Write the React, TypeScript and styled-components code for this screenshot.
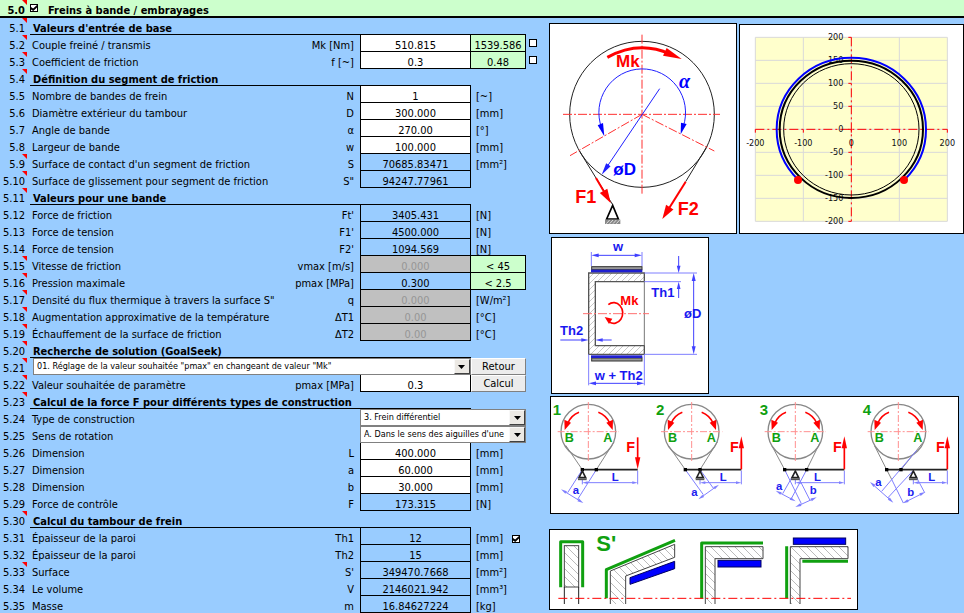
import React from "react";
import styled, { createGlobalStyle, css } from "styled-components";

const INK = "#000000";
const RED = "#ff0000";
const BLUE = "#0000ff";
const SOFT_BLUE = "#7f7fff";
const GREEN = "#10a010";

const GlobalStyle = createGlobalStyle`
  html, body {
    margin: 0;
    background: #99ccff;
  }
  body, input, select, button {
    font-family: "DejaVu Sans Condensed", "DejaVu Sans", sans-serif;
    font-size: 11px;
    color: ${INK};
  }
`;

/* ---------- sheet ---------- */

const Sheet = styled.main`
  min-height: 100vh;
  background: #99ccff;
  overflow: hidden;
`;

const TitleBar = styled.header`
  display: flex;
  align-items: center;
  height: 16px;
  background: #ccffcc;
  border-bottom: 2px solid ${INK};
`;

const Title = styled.h1`
  margin: 0;
  padding: 6px 0 0 10px;
  font-size: 11px;
  line-height: 10px;
`;

const TitleNumber = styled.span`
  position: relative;
  box-sizing: border-box;
  width: 30px;
  height: 16px;
  padding: 6px 5px 0 0;
  text-align: right;
  line-height: 10px;
  font-weight: bold;
`;

const Body = styled.div`
  display: grid;
  grid-template-columns: minmax(0, 549fr) minmax(0, 415fr);
  align-items: start;
`;

const NoteMark = styled.i`
  position: absolute;
  top: 0;
  right: 3px;
  width: 5px;
  height: 5px;
  background: ${RED};
  clip-path: polygon(0 0, 100% 0, 100% 100%);
`;

const Table = styled.table`
  width: 100%;
  table-layout: fixed;
  border-collapse: separate;
  border-spacing: 0;
  line-height: 10px;
  white-space: nowrap;

  td, th {
    box-sizing: border-box;
    height: 17px;
    padding: 6px 0 0;
    vertical-align: top;
    font-weight: normal;
    text-align: left;
  }
`;

const Col = styled.col<{ $w?: number }>`
  ${(p) => p.$w && css`width: ${p.$w}px;`}
`;

const NumberCell = styled.td`
  position: relative;

  && {
    padding-right: 5px;
    text-align: right;
  }
`;

const HeadingCell = styled.th`
  && {
    padding-left: 3px;
    font-weight: bold;
    border-bottom: 1px solid ${INK};
  }
`;

const LabelCell = styled.th`
  && {
    padding-left: 2px;
  }
`;

const SymbolCell = styled.td`
  && {
    padding-right: 6px;
    text-align: right;
  }
`;

type Tone = "input" | "plain" | "off";

const ValueCell = styled.td<{ $tone: Tone }>`
  && {
    padding-top: ${(p) => (p.$tone === "input" ? 0 : 6)}px;
    text-align: center;
    border: solid ${INK};
    border-width: 0 1px 1px;
    background: ${(p) => ({ input: "#ffffff", plain: "transparent", off: "#c0c0c0" })[p.$tone]};
    color: ${(p) => (p.$tone === "off" ? "#969696" : INK)};
  }
`;

const ValueInput = styled.input`
  display: block;
  box-sizing: border-box;
  width: 100%;
  height: 16px;
  padding: 4px 0 0;
  border: 0;
  background: transparent;
  text-align: center;
  line-height: 12px;
`;

const LimitCell = styled.td`
  && {
    text-align: center;
    background: #ccffcc;
    border: solid ${INK};
    border-width: 0 1px 1px 0;
  }
`;

const UnitCell = styled.td<{ $ruled?: boolean }>`
  && {
    padding-left: 5px;
    ${(p) => p.$ruled && css`border-bottom: 1px solid ${INK};`}
  }
`;

const UnitLine = styled.div`
  display: flex;
  align-items: center;
  gap: 9px;
`;

const SideCell = styled.td`
  && {
    padding-top: 4px;
    padding-left: 3px;
  }
`;

const ControlCell = styled.td<{ $indent?: boolean }>`
  && {
    padding: 0 0 0 ${(p) => (p.$indent ? 3 : 0)}px;
  }
`;

const Tick = styled.input.attrs({ type: "checkbox" })`
  appearance: none;
  display: block;
  box-sizing: border-box;
  flex: none;
  width: 8px;
  height: 8px;
  margin: 0;
  border: 1px solid ${INK};
  background: #ffffff;

  &:checked::after {
    content: "";
    display: block;
    width: 6px;
    height: 6px;
    background: ${INK};
    clip-path: polygon(0 35%, 35% 60%, 100% 0, 100% 40%, 38% 100%, 0 75%);
  }
`;

const Combo = styled.div`
  display: grid;
  grid-template-columns: minmax(0, 1fr) 16px;
  height: 17px;
  box-sizing: border-box;
  border: 1px solid #808080;
  background: #ffffff;
`;

const ComboSelect = styled.select`
  appearance: none;
  grid-area: 1 / 1 / 2 / 3;
  width: 100%;
  height: 15px;
  padding: 0 15px 0 3px;
  border: 0;
  border-radius: 0;
  background: transparent;
  font-size: 9px;
  line-height: 15px;
`;

const ComboArrow = styled.span`
  grid-area: 1 / 2;
  display: grid;
  place-items: center;
  box-sizing: border-box;
  border: 1px solid;
  border-color: #f8f8f8 #404040 #404040 #f8f8f8;
  background: #ece9e4;
  pointer-events: none;
`;

const PushButton = styled.button`
  display: block;
  width: 100%;
  height: 17px;
  padding: 0;
  border: 1px solid;
  border-color: #ffffff #808080 #808080 #ffffff;
  background: #ececec;
  line-height: 13px;
`;

/* ---------- figures ---------- */

const Gallery = styled.aside`
  display: grid;
  grid-template-columns: 160fr 28fr 121fr 101fr 5fr;
  padding-top: 5px;
`;

const Figure = styled.figure<{ $from: number; $to: number; $left?: number; $top?: number }>`
  grid-column: ${(p) => p.$from} / ${(p) => p.$to};
  align-self: start;
  min-width: 0;
  margin: ${(p) => p.$top ?? 0}px 0 0 ${(p) => p.$left ?? 0}px;
  border: 1px solid ${INK};
  background: #ffffff;
`;

const Drawing = styled.svg`
  display: block;
  width: 100%;
  height: auto;
  font-family: "Liberation Sans", sans-serif;
  font-weight: bold;
`;

const AxisText = styled.g`
  font-family: "DejaVu Sans Condensed", "DejaVu Sans", sans-serif;
  font-weight: normal;
`;

type ArrowProps = {
  p: [number, number, number, number];
  color: string;
  w: number;
  head: number;
  spread?: number;
  both?: boolean;
};

function headPoints(x: number, y: number, ux: number, uy: number, head: number, spread: number) {
  const bx = x - ux * head;
  const by = y - uy * head;
  return `${x},${y} ${bx - uy * spread},${by + ux * spread} ${bx + uy * spread},${by - ux * spread}`;
}

function Arrow({ p: [x1, y1, x2, y2], color, w, head, spread = head / 4, both }: ArrowProps) {
  const len = Math.hypot(x2 - x1, y2 - y1);
  const ux = (x2 - x1) / len;
  const uy = (y2 - y1) / len;
  const trim = head * 0.7;
  return (
    <g stroke="none" fill={color}>
      <line
        x1={both ? x1 + ux * trim : x1}
        y1={both ? y1 + uy * trim : y1}
        x2={x2 - ux * trim}
        y2={y2 - uy * trim}
        stroke={color}
        strokeWidth={w}
      />
      <polygon points={headPoints(x2, y2, ux, uy, head, spread)} />
      {both && <polygon points={headPoints(x1, y1, -ux, -uy, head, spread)} />}
    </g>
  );
}

function ForcesFigure() {
  return (
    <Drawing viewBox="15 18 558 627" role="img" aria-label="Forces sur le frein à bande">
      <g fill="none" stroke="#222" strokeWidth="3">
        <ellipse cx="291" cy="289" rx="217" ry="219" />
        <path d="M104 400L153 480L203 560M486 385L422 491" />
      </g>
      <g fill="none" stroke="#ff3030" strokeWidth="3" strokeDasharray="27 6 6 6">
        <path d="M291 50V527M54 289H525M291 289L75 413M291 289L508 399" />
      </g>
      <g fill="none" stroke="#2020ff" strokeWidth="3">
        <path d="M170 330A130 131 0 1 1 415 325" />
      </g>
      <g fill={BLUE}>
        <polygon points="178,355 158,322 174,315" />
        <polygon points="407,349 408,314 425,318" />
      </g>
      <Arrow p={[344, 212, 170, 470]} color="#2020ff" w={3} head={36} spread={8} />
      <path d="M187 118Q282 66 375 108" fill="none" stroke={RED} strokeWidth="9" />
      <polygon points="410,123 354,113 365,90" fill={RED} />
      <Arrow p={[153, 480, 197, 555]} color={RED} w={6} head={42} spread={13} />
      <Arrow p={[422, 491, 352, 603]} color={RED} w={6} head={42} spread={13} />
      <polygon points="203,562 185,603 220,603" fill="#fff" stroke={INK} strokeWidth="5" />
      <rect x="180" y="605" width="46" height="13" fill="#888" />
      <path d="M184 617l10 -11M194 617l10 -11M204 617l10 -11M214 617l10 -11" stroke="#ddd" strokeWidth="3" />
      <g fill={RED}>
        <text x="213" y="148" fontSize="51">Mk</text>
        <text x="91" y="555" fontSize="54">F1</text>
        <text x="398" y="591" fontSize="54">F2</text>
      </g>
      <g fill={BLUE}>
        <text x="205" y="471" fontSize="51">øD</text>
        <text x="402" y="209" fontSize="60" fontStyle="italic" fontFamily="Liberation Serif, serif">α</text>
      </g>
    </Drawing>
  );
}

const X_TICKS = [-200, -100, 0, 100, 200];
const Y_TICKS = [200, 150, 100, 50, 0, -50, -100, -150, -200];

function BandChart() {
  const px = (v: number) => 349 + v * 1.44;
  const py = (v: number) => 334 - v * 1.38;
  return (
    <Drawing viewBox="15 21 669 624" role="img" aria-label="Tracé du tambour et de la bande">
      <rect x="61" y="58" width="576" height="552" fill="#ffffcc" />
      <g stroke="#d9d9d9" strokeWidth="3">
        {X_TICKS.map((v) => <line key={v} x1={px(v)} x2={px(v)} y1="58" y2="610" />)}
        {Y_TICKS.map((v) => <line key={v} x1="61" x2="637" y1={py(v)} y2={py(v)} />)}
      </g>
      <g stroke={RED} strokeWidth="3">
        <path d="M61 334H637M349 58V610" strokeDasharray="27 9 6 9" />
        {Y_TICKS.map((v) => <line key={v} x1="340" x2="349" y1={py(v)} y2={py(v)} />)}
        {X_TICKS.map((v) => <line key={v} x1={px(v)} x2={px(v)} y1="334" y2="344" />)}
      </g>
      <AxisText>
        <g fontSize="27" textAnchor="end" fill="#111">
          {Y_TICKS.map((v) => <text key={v} x="325" y={py(v) + 8}>{v}</text>)}
        </g>
        <g fontSize="27" textAnchor="middle" fill="#111">
          {X_TICKS.map((v) => <text key={v} x={px(v)} y="383">{v}</text>)}
        </g>
      </AxisText>
      <g fill="none">
        <ellipse cx="349" cy="334" rx="203" ry="197" stroke={INK} strokeWidth="3" />
        <ellipse cx="349" cy="334" rx="215" ry="206" stroke={INK} strokeWidth="6" />
        <path d="M190 486A224 215 0 1 1 508 486" stroke={BLUE} strokeWidth="6" />
      </g>
      <circle cx="189" cy="486" r="12" fill={RED} />
      <circle cx="507" cy="486" r="12" fill={RED} />
    </Drawing>
  );
}

function DrumSection() {
  return (
    <Drawing viewBox="21 18 468 465" role="img" aria-label="Coupe du tambour">
      <defs>
        <pattern id="hatchDrum" width="18" height="18" patternUnits="userSpaceOnUse">
          <path d="M-3 3L3 -3M0 18L18 0M15 21L21 15" stroke="#aaa" strokeWidth="2" />
        </pattern>
      </defs>
      <path
        d="M131 123H298V149H151V341H298V367H131Z"
        fill="url(#hatchDrum)"
        stroke="#555"
        strokeWidth="4"
      />
      <path d="M298 149V341" stroke="#777" strokeWidth="3" />
      <g stroke="#333" strokeWidth="3">
        <rect x="140" y="104" width="151" height="9" fill="#999" />
        <rect x="140" y="378" width="151" height="9" fill="#999" />
      </g>
      <rect x="138" y="113" width="154" height="8" fill="#2020d0" />
      <rect x="138" y="370" width="154" height="8" fill="#2020d0" />
      <path d="M114 245H312" stroke="#ff7070" strokeWidth="3" strokeDasharray="27 6 6 6" />
      <path
        d="M139 60V102M291 60V102M298 123H456M298 149H408M298 367H456M131 367V460M298 367V460"
        fill="none"
        stroke={SOFT_BLUE}
        strokeWidth="3"
      />
      <g>
        <Arrow p={[139, 70, 291, 70]} color="#4040ff" w={3} head={22} both />
        <Arrow p={[446, 123, 446, 367]} color="#4040ff" w={3} head={24} both />
        <Arrow p={[131, 454, 298, 454]} color="#4040ff" w={3} head={22} both />
        <Arrow p={[401, 72, 401, 123]} color="#4040ff" w={3} head={22} />
        <Arrow p={[401, 198, 401, 149]} color="#4040ff" w={3} head={22} />
        <Arrow p={[46, 324, 131, 324]} color="#4040ff" w={3} head={22} />
        <Arrow p={[200, 324, 151, 324]} color="#4040ff" w={3} head={22} />
      </g>
      <path d="M190 218A27 31 0 1 1 193 270" fill="none" stroke={RED} strokeWidth="5" />
      <polygon points="179,255 202,260 192,276" fill={RED} />
      <g fill="#1818f0" fontSize="39">
        <text x="204" y="58">w</text>
        <text x="319" y="195">Th1</text>
        <text x="417" y="258">øD</text>
        <text x="45" y="310">Th2</text>
        <text x="149" y="443">w + Th2</text>
      </g>
      <text x="226" y="220" fill={RED} fontSize="39">Mk</text>
    </Drawing>
  );
}

type Scheme = {
  n: number;
  dx: number;
  cx: number;
  support: number;
  pins: number[];
  tip: number;
  down?: boolean;
  bands: string;
  guides: string;
  dims: [number, number, number, number][];
  marks: [string, number, number][];
};

const SCHEMES: Scheme[] = [
  {
    n: 1, dx: 0, cx: 130, support: 112, pins: [112, 154], tip: 278, down: true,
    bands: "M62 160L112 233M207 150L154 233",
    guides: "M112 233L68 302M154 233L98 322",
    dims: [[48, 292, 115, 333]],
    marks: [["L", 200, 266], ["a", 83, 307]],
  },
  {
    n: 2, dx: 0, cx: 440, support: 465, pins: [421, 465], tip: 589,
    bands: "M371 162L421 233M517 150L465 233",
    guides: "M421 233L475 308M465 233L506 290",
    dims: [[460, 322, 522, 278]],
    marks: [["L", 524, 266], ["a", 439, 311]],
  },
  {
    n: 3, dx: 615, cx: 136, support: 136, pins: [104, 170], tip: 283,
    bands: "M66 162L104 233M211 150L170 233",
    guides: "M104 233L154 335M170 233L124 320M136 238L98 305M136 238L180 325",
    dims: [[77, 296, 137, 328], [136, 345, 200, 316]],
    marks: [["L", 192, 266], ["a", 78, 295], ["b", 179, 306]],
  },
  {
    n: 4, dx: 615, cx: 445, support: 490, pins: [410, 453], tip: 592,
    bands: "M374 162L410 233L425 262M520 150L453 233",
    guides: "M425 262L460 333M500 175L395 298M490 235L413 318M490 238L524 302",
    dims: [[360, 270, 430, 332], [458, 334, 526, 300]],
    marks: [["L", 535, 266], ["a", 376, 283], ["b", 472, 312]],
  },
];

function BrakeScheme({ s }: { s: Scheme }) {
  const { cx } = s;
  const left = Math.min(...s.pins, s.support);
  return (
    <g transform={`translate(${s.dx} 0)`}>
      <circle cx={cx} cy="119" r="82" fill="none" stroke="#888" strokeWidth="4" />
      <path
        d={`M${cx} 30V210M${cx - 92} 119H${cx + 92}`}
        stroke="#ff9090"
        strokeWidth="3"
        strokeDasharray="21 6 6 6"
      />
      <path
        d={`M${cx - 28} 61Q${cx - 52} 70 ${cx - 63} 96M${cx + 30} 61Q${cx + 54} 70 ${cx + 66} 96`}
        fill="none"
        stroke={RED}
        strokeWidth="5"
      />
      <polygon points={`${cx - 71},114 ${cx - 72},83 ${cx - 52},92`} fill={RED} />
      <polygon points={`${cx + 73},114 ${cx + 74},83 ${cx + 54},92`} fill={RED} />
      <path d={s.bands} fill="none" stroke="#888" strokeWidth="3" />
      <g fill="none" stroke={SOFT_BLUE} strokeWidth="3">
        <path d={s.guides} />
        <path d={`M${s.tip} 236V277M${s.support} 262V277`} />
      </g>
      <path d={`M${left} 233H${s.tip}`} stroke="#222" strokeWidth="5" />
      {s.pins.map((x) => <rect key={x} x={x - 5} y="228" width="10" height="10" fill={INK} />)}
      <polygon
        points={`${s.support},237 ${s.support - 10},257 ${s.support + 10},257`}
        fill="none"
        stroke="#222"
        strokeWidth="5"
      />
      <path d={`M${s.support - 13} 262h26`} stroke="#555" strokeWidth="5" />
      <Arrow
        p={s.down ? [s.tip, 136, s.tip, 232] : [s.tip, 232, s.tip, 133]}
        color={RED}
        w={5}
        head={36}
        spread={8}
      />
      <Arrow p={[s.support, 272, s.tip, 272]} color={SOFT_BLUE} w={3} head={16} both />
      {s.dims.map((d, i) => <Arrow key={i} p={d} color={SOFT_BLUE} w={3} head={18} both />)}
      <g fill={GREEN}>
        <text x={cx - 107} y="70" fontSize="45">{s.n}</text>
        <text x={cx - 71} y="151" fontSize="38">B</text>
        <text x={cx + 45} y="151" fontSize="38">A</text>
      </g>
      <text x={s.tip - 34} y="179" fontSize="43" fill={RED}>F</text>
      <g fill="#2020f0" fontSize="34">
        {s.marks.map(([t, x, y]) => <text key={t} x={x} y={y}>{t}</text>)}
      </g>
    </g>
  );
}

function SchemesFigure() {
  return (
    <Drawing viewBox="18 15 1221 348" role="img" aria-label="Types de construction 1 à 4">
      {SCHEMES.map((s) => <BrakeScheme key={s.n} s={s} />)}
    </Drawing>
  );
}

function SurfacesFigure() {
  return (
    <Drawing viewBox="15 15 921 237" role="img" aria-label="Surface de refroidissement S'">
      <defs>
        <pattern id="hatchWall" width="24" height="24" patternUnits="userSpaceOnUse">
          <path d="M0 0L24 24M-3 21L3 27M21 -3L27 3" stroke="#999" strokeWidth="2" />
        </pattern>
      </defs>
      <g fill="url(#hatchWall)" stroke="#444" strokeWidth="3">
        <rect x="58" y="62" width="43" height="124" />
        <path d="M196 237V138L389 58V97L242 153V237" />
        <path d="M481 237V65H654V101H510V237" />
        <path d="M736 237V65H909V101H765V237" />
      </g>
      <path d="M58 186V237M101 186V237" stroke="#222" strokeWidth="3" />
      <g fill="none" stroke={GREEN} strokeWidth="9" strokeLinejoin="round">
        <path d="M47 187V50H113V187" />
        <path d="M184 220V134L390 46" />
        <path d="M470 221V54H654" />
        <path d="M725 64V220M772 109H909" />
      </g>
      <g fill={BLUE} stroke="#000060" strokeWidth="3">
        <path d="M255 158L389 109V131L255 178Z" />
        <rect x="519" y="106" width="129" height="20" />
        <rect x="745" y="39" width="157" height="19" />
      </g>
      <path d="M40 220H918" stroke={RED} strokeWidth="3" strokeDasharray="27 9 6 9" />
      <text x="154" y="77" fontSize="66" fill={GREEN}>S'</text>
    </Drawing>
  );
}

/* ---------- data ---------- */

type Row = {
  n: number;
  note?: boolean;
  heading?: string;
  wide?: boolean;
  label?: string;
  symbol?: string;
  value?: string;
  tone?: Tone;
  unit?: string;
  limit?: string;
  ruled?: boolean;
  side?: boolean;
  unitTick?: boolean;
  options?: string[];
  action?: string;
};

const ROWS: Row[] = [
  { n: 1, note: true, heading: "Valeurs d'entrée de base", wide: true },
  { n: 2, note: true, label: "Couple freiné / transmis", symbol: "Mk [Nm]", value: "510.815", tone: "input", limit: "1539.586", side: true },
  { n: 3, note: true, label: "Coefficient de friction", symbol: "f [~]", value: "0.3", tone: "input", limit: "0.48", side: true },
  { n: 4, note: true, heading: "Définition du segment de friction" },
  { n: 5, label: "Nombre de bandes de frein", symbol: "N", value: "1", tone: "input", unit: "[~]" },
  { n: 6, label: "Diamètre extérieur du tambour", symbol: "D", value: "300.000", tone: "input", unit: "[mm]" },
  { n: 7, label: "Angle de bande", symbol: "α", value: "270.00", tone: "input", unit: "[°]" },
  { n: 8, label: "Largeur de bande", symbol: "w", value: "100.000", tone: "input", unit: "[mm]" },
  { n: 9, note: true, label: "Surface de contact d'un segment de friction", symbol: "S", value: "70685.83471", unit: "[mm²]" },
  { n: 10, note: true, label: "Surface de glissement pour segment de friction", symbol: "S\"", value: "94247.77961" },
  { n: 11, note: true, heading: "Valeurs pour une bande" },
  { n: 12, label: "Force de friction", symbol: "Ft'", value: "3405.431", unit: "[N]" },
  { n: 13, label: "Force de tension", symbol: "F1'", value: "4500.000", unit: "[N]" },
  { n: 14, label: "Force de tension", symbol: "F2'", value: "1094.569", unit: "[N]", ruled: true },
  { n: 15, note: true, label: "Vitesse de friction", symbol: "vmax [m/s]", value: "0.000", tone: "off", limit: "< 45" },
  { n: 16, note: true, label: "Pression maximale", symbol: "pmax [MPa]", value: "0.300", limit: "< 2.5" },
  { n: 17, note: true, label: "Densité du flux thermique à travers la surface S\"", symbol: "q", value: "0.000", tone: "off", unit: "[W/m²]" },
  { n: 18, note: true, label: "Augmentation approximative de la température", symbol: "ΔT1", value: "0.00", tone: "off", unit: "[°C]" },
  { n: 19, note: true, label: "Échauffement de la surface de friction", symbol: "ΔT2", value: "0.00", tone: "off", unit: "[°C]" },
  { n: 20, note: true, heading: "Recherche de solution (GoalSeek)" },
  { n: 21, note: true, options: ["01. Réglage de la valeur souhaitée \"pmax\" en changeant de valeur \"Mk\""], action: "Retour" },
  { n: 22, note: true, label: "Valeur souhaitée de paramètre", symbol: "pmax [MPa]", value: "0.3", tone: "input", action: "Calcul" },
  { n: 23, note: true, heading: "Calcul de la force F pour différents types de construction" },
  { n: 24, label: "Type de construction", options: ["3. Frein différentiel"] },
  { n: 25, label: "Sens de rotation", options: ["A. Dans le sens des aiguilles d'une"] },
  { n: 26, label: "Dimension", symbol: "L", value: "400.000", tone: "input", unit: "[mm]" },
  { n: 27, label: "Dimension", symbol: "a", value: "60.000", tone: "input", unit: "[mm]" },
  { n: 28, label: "Dimension", symbol: "b", value: "30.000", tone: "input", unit: "[mm]" },
  { n: 29, label: "Force de contrôle", symbol: "F", value: "173.315", unit: "[N]" },
  { n: 30, note: true, heading: "Calcul du tambour de frein" },
  { n: 31, label: "Épaisseur de la paroi", symbol: "Th1", value: "12", unit: "[mm]", unitTick: true },
  { n: 32, label: "Épaisseur de la paroi", symbol: "Th2", value: "15", unit: "[mm]" },
  { n: 33, note: true, label: "Surface", symbol: "S'", value: "349470.7668", unit: "[mm²]" },
  { n: 34, label: "Le volume", symbol: "V", value: "2146021.942", unit: "[mm³]" },
  { n: 35, label: "Masse", symbol: "m", value: "16.84627224", unit: "[kg]" },
];

function Dropdown({ id, label, options }: { id: string; label?: string; options: string[] }) {
  return (
    <Combo>
      <ComboSelect id={id} aria-label={label} defaultValue={options[0]}>
        {options.map((o) => <option key={o}>{o}</option>)}
      </ComboSelect>
      <ComboArrow>
        <svg width="7" height="4" viewBox="0 0 7 4"><path d="M0 0H7L3.5 4Z" /></svg>
      </ComboArrow>
    </Combo>
  );
}

function SheetRow({ row }: { row: Row }) {
  const id = `cell-${row.n}`;
  const number = (
    <NumberCell>
      5.{row.n}
      {row.note && <NoteMark />}
    </NumberCell>
  );

  if (row.heading) {
    return (
      <tr>
        {number}
        <HeadingCell colSpan={row.wide ? 4 : 3}>{row.heading}</HeadingCell>
      </tr>
    );
  }

  if (row.options && !row.label) {
    return (
      <tr>
        {number}
        <ControlCell colSpan={3} $indent>
          <Dropdown id={id} label="Recherche de solution" options={row.options} />
        </ControlCell>
        <ControlCell>
          <PushButton type="button">{row.action}</PushButton>
        </ControlCell>
      </tr>
    );
  }

  const editable = row.tone === "input" || row.options;
  const label = (
    <LabelCell scope="row">
      {editable ? <label htmlFor={id}>{row.label}</label> : row.label}
    </LabelCell>
  );

  if (row.options) {
    return (
      <tr>
        {number}
        {label}
        <SymbolCell />
        <ControlCell colSpan={2}>
          <Dropdown id={id} options={row.options} />
        </ControlCell>
      </tr>
    );
  }

  return (
    <tr>
      {number}
      {label}
      <SymbolCell>{row.symbol}</SymbolCell>
      <ValueCell $tone={row.tone ?? "plain"}>
        {row.tone === "input" ? <ValueInput id={id} defaultValue={row.value} /> : row.value}
      </ValueCell>
      {row.limit ? (
        <LimitCell>{row.limit}</LimitCell>
      ) : row.action ? (
        <ControlCell>
          <PushButton type="button">{row.action}</PushButton>
        </ControlCell>
      ) : (
        <UnitCell $ruled={row.ruled}>
          <UnitLine>
            {row.unit}
            {row.unitTick && <Tick defaultChecked aria-label={`${row.label} ${row.symbol}`} />}
          </UnitLine>
        </UnitCell>
      )}
      {row.side && (
        <SideCell>
          <Tick aria-label={`Limite ${row.symbol}`} />
        </SideCell>
      )}
    </tr>
  );
}

export default function App() {
  return (
    <Sheet>
      <GlobalStyle />
      <TitleBar>
        <TitleNumber>
          5.0
          <NoteMark />
        </TitleNumber>
        <Tick id="section" defaultChecked />
        <Title>
          <label htmlFor="section">Freins à bande / embrayages</label>
        </Title>
      </TitleBar>
      <Body>
        <Table>
          <colgroup>
            <Col $w={30} />
            <Col />
            <Col $w={70} />
            <Col $w={111} />
            <Col $w={55} />
            <Col $w={23} />
          </colgroup>
          <tbody>
            {ROWS.map((row) => <SheetRow key={row.n} row={row} />)}
          </tbody>
        </Table>
        <Gallery>
          <Figure $from={1} $to={3}><ForcesFigure /></Figure>
          <Figure $from={3} $to={6} $left={2} $top={1}><BandChart /></Figure>
          <Figure $from={1} $to={2} $left={2} $top={3}><DrumSection /></Figure>
          <Figure $from={1} $to={5} $left={1} $top={2}><SchemesFigure /></Figure>
          <Figure $from={1} $to={4} $top={15}><SurfacesFigure /></Figure>
        </Gallery>
      </Body>
    </Sheet>
  );
}
